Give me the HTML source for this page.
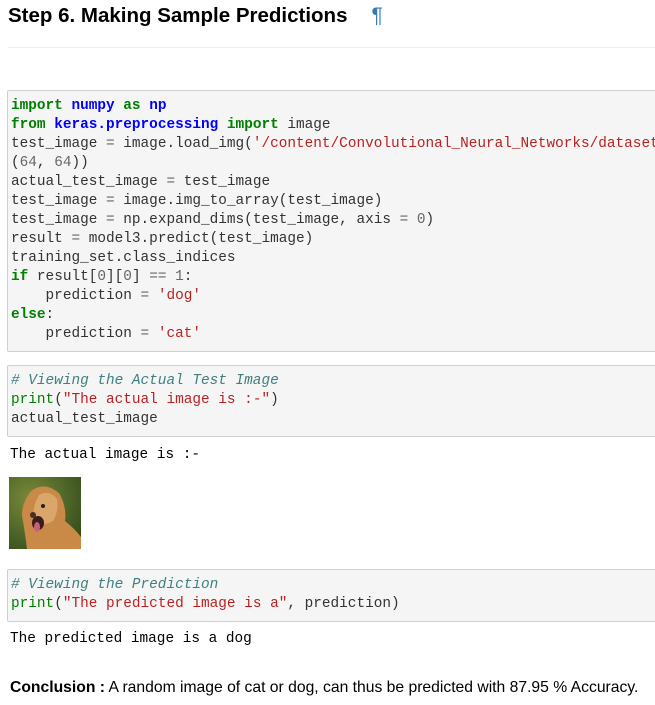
<!DOCTYPE html>
<html><head><style>
html,body{margin:0;width:655px;height:705px;overflow:hidden}
body{background:#fff;font-family:"Liberation Sans",sans-serif;position:relative}
h2{position:absolute;left:8px;top:4px;margin:0;font-size:20.5px;font-weight:bold;color:#000}
h2 span{color:#337ab7;margin-left:24px;font-weight:normal;font-size:21px}
.hr{position:absolute;left:8px;right:0;top:47px;border-top:1px solid #eee}
.code{position:absolute;left:7px;right:-3px;background:#f5f5f5;border:1px solid #cfcfcf;border-radius:2px;box-sizing:border-box;overflow:hidden}
pre{margin:0;font-family:"Liberation Mono",monospace;font-size:14.4px;line-height:19px;color:#333;white-space:pre}
.code pre{padding:6px 0 0 3px}
.k{color:#008000;font-weight:bold}.n{color:#0000ff;font-weight:bold}.s{color:#ba2121}.o{color:#666}.b{color:#008000}.c{color:#408080;font-style:italic}
.out{position:absolute;left:10px;color:#000}
</style></head><body>
<h2>Step 6. Making Sample Predictions<span>¶</span></h2>
<div class="hr"></div>
<div class="code" style="top:90px;height:262px"><pre><span class="k">import</span> <span class="n">numpy</span> <span class="k">as</span> <span class="n">np</span>
<span class="k">from</span> <span class="n">keras.preprocessing</span> <span class="k">import</span> image
test_image <span class="o">=</span> image.load_img(<span class="s">'/content/Convolutional_Neural_Networks/dataset</span>
(<span class="o">64</span>, <span class="o">64</span>))
actual_test_image <span class="o">=</span> test_image
test_image <span class="o">=</span> image.img_to_array(test_image)
test_image <span class="o">=</span> np.expand_dims(test_image, axis <span class="o">=</span> <span class="o">0</span>)
result <span class="o">=</span> model3.predict(test_image)
training_set.class_indices
<span class="k">if</span> result[<span class="o">0</span>][<span class="o">0</span>] <span class="o">==</span> <span class="o">1</span>:
    prediction <span class="o">=</span> <span class="s">'dog'</span>
<span class="k">else</span>:
    prediction <span class="o">=</span> <span class="s">'cat'</span></pre></div>
<div class="code" style="top:365px;height:72px"><pre><span class="c"># Viewing the Actual Test Image</span>
<span class="b">print</span>(<span class="s">"The actual image is :-"</span>)
actual_test_image</pre></div>
<pre class="out" style="top:446px">The actual image is :-</pre>
<svg style="position:absolute;left:9px;top:477px" width="72" height="72">
<defs><radialGradient id="g" cx="0.3" cy="0.3" r="0.9"><stop offset="0" stop-color="#7a8a3a"/><stop offset="1" stop-color="#2f4a1a"/></radialGradient></defs>
<rect width="72" height="72" fill="url(#g)"/>
<path d="M22 14 Q36 4 50 16 Q58 30 56 44 Q66 52 72 60 L72 72 L18 72 Q16 56 14 44 Q10 30 22 14Z" fill="#c98a48"/>
<path d="M30 18 Q40 12 48 22 Q50 34 44 44 Q34 50 26 44 Q22 32 30 18Z" fill="#dba66a"/>
<ellipse cx="29" cy="46" rx="6" ry="7" fill="#3a1c1c"/><ellipse cx="28" cy="50" rx="3" ry="5" fill="#c9607a"/>
<circle cx="34" cy="29" r="2" fill="#222"/><circle cx="24" cy="38" r="3" fill="#4a2a2a"/>
</svg>
<div class="code" style="top:569px;height:53px"><pre><span class="c"># Viewing the Prediction</span>
<span class="b">print</span>(<span class="s">"The predicted image is a"</span>, prediction)</pre></div>
<pre class="out" style="top:630px">The predicted image is a dog</pre>
<div style="position:absolute;left:10px;top:679px;font-size:15.7px;color:#000;white-space:nowrap"><b>Conclusion :</b> A random image of cat or dog, can thus be predicted with 87.95 % Accuracy.</div>
</body></html>
